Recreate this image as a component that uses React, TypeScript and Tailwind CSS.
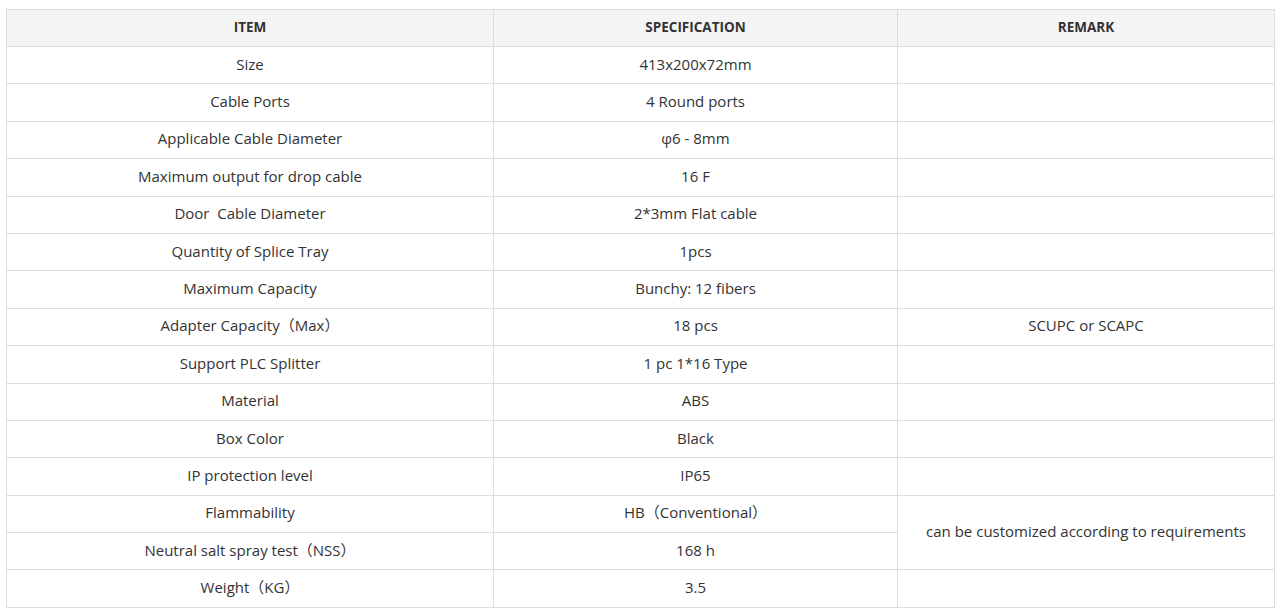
import React from "react";

const rows: [string, string, string | null | undefined][] = [
  ["Size", "413x200x72mm", ""],
  ["Cable Ports", "4 Round ports", ""],
  ["Applicable Cable Diameter", "φ6 - 8mm", ""],
  ["Maximum output for drop cable", "16 F", ""],
  ["Door\u00a0 Cable Diameter", "2*3mm Flat cable", ""],
  ["Quantity of Splice Tray", "1pcs", ""],
  ["Maximum Capacity", "Bunchy: 12 fibers", ""],
  ["Adapter Capacity（Max）", "18 pcs", "SCUPC or SCAPC"],
  ["Support PLC Splitter", "1 pc 1*16 Type", ""],
  ["Material", "ABS", ""],
  ["Box Color", "Black", ""],
  ["IP protection level", "IP65", ""],
  ["Flammability", "HB（Conventional）", "can be customized according to requirements"],
  ["Neutral salt spray test（NSS）", "168 h", null],
  ["Weight（KG）", "3.5", ""],
];

const cell = "border border-[#dddddd] text-center align-middle px-2 pt-0 pb-[3px] leading-[20px]";

export default function App() {
  return (
    <div
      className="bg-white pt-[9px] px-[6px] w-[1280px] h-[616px]"
      style={{ fontFamily: '"Open Sans", "Noto Sans CJK SC", sans-serif' }}
    >
      <table className="border-collapse w-[1268px] table-fixed text-[15px] text-[#333333]">
        <colgroup>
          <col className="w-[487px]" />
          <col className="w-[404px]" />
          <col className="w-[377px]" />
        </colgroup>
        <thead>
          <tr className="h-[37px] bg-[#f4f4f4]">
            <th className={`${cell} font-bold text-[13.5px] text-[#333333]`}>ITEM</th>
            <th className={`${cell} font-bold text-[13.5px] text-[#333333]`}>SPECIFICATION</th>
            <th className={`${cell} font-bold text-[13.5px] text-[#333333]`}>REMARK</th>
          </tr>
        </thead>
        <tbody>
          {rows.map(([a, b, c], i) => (
            <tr key={i} className="h-[37.4px]">
              <td className={cell}>{a}</td>
              <td className={cell}>{b}</td>
              {c === null ? null : (
                <td className={cell} rowSpan={i === 12 ? 2 : 1}>
                  {c}
                </td>
              )}
            </tr>
          ))}
        </tbody>
      </table>
    </div>
  );
}
